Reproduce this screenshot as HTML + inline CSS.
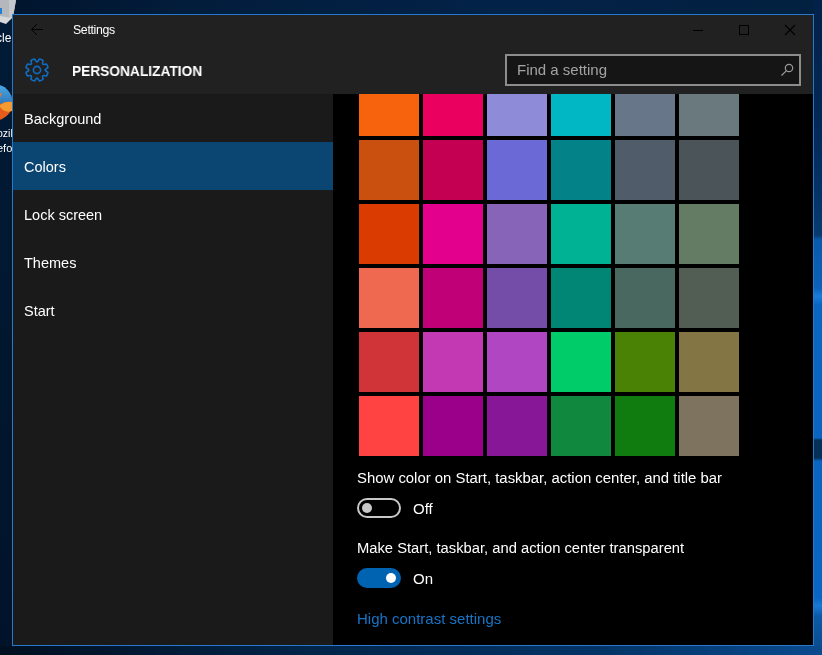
<!DOCTYPE html>
<html><head><meta charset="utf-8">
<style>
*{margin:0;padding:0;box-sizing:border-box}
html,body{width:822px;height:655px;overflow:hidden;background:#011a36;font-family:"Liberation Sans",sans-serif}
.abs{position:absolute}
#win{position:absolute;left:12px;top:14px;width:802px;height:632px;border:1px solid #2878cc;background:#000}
#hdr{position:absolute;left:13px;top:15px;width:800px;height:79px;background:#212121}
#side{position:absolute;left:13px;top:94px;width:320px;height:551px;background:#1a1a1a}
#content{position:absolute;left:333px;top:94px;width:480px;height:551px;background:#000;overflow:hidden}
.t{position:absolute;white-space:nowrap;color:#fff;line-height:1;will-change:transform}
.sw{position:absolute;width:60px;height:60px}
.nav{position:absolute;left:13px;width:320px;height:48px}
</style></head><body>
<!-- desktop -->
<div class="abs" style="left:0;top:0;width:822px;height:15px;background:linear-gradient(90deg,#01142c 0px,#021d3c 200px,#032248 500px,#02203f 822px)"></div>
<div class="abs" style="left:0;top:0;width:13px;height:655px;background:linear-gradient(#011a36,#011830 300px,#01132a 655px)"></div>
<div class="abs" style="left:814px;top:0;width:8px;height:655px;background:linear-gradient(#02214a 0px,#032856 120px,#05346a 200px,#083a70 235px,#0a5aaa 240px,#0b62b8 288px,#1a7cda 296px,#0b66c2 305px,#0a64c0 438px,#04305a 440px,#04305a 458px,#0a64c0 461px,#0a66c4 598px,#1a7ad2 606px,#0b5aa8 616px,#0a4a8a 655px)"></div>
<div class="abs" style="left:0;top:646px;width:822px;height:9px;background:linear-gradient(90deg,#010f20,#022448 300px,#033466 600px,#0a4a8e)"></div>
<!-- recycle bin -->
<svg class="abs" style="left:0;top:0" width="20" height="30" viewBox="0 0 20 30">
<path d="M0 0H16L13 17L6 23L0 21Z" fill="#b4b8bc"/>
<path d="M9 0H16L13 17L9 20Z" fill="#c4c7cb"/>
<path d="M0 16L12 18L6 24L0 22Z" fill="#d6d8da"/>
<path d="M0 8H2V14H0Z" fill="#1e7fd8"/>
</svg>
<div class="t" style="left:-4px;top:32px;font-size:12px;color:#fff">cle</div>
<!-- firefox -->
<svg class="abs" style="left:-22px;top:82px" width="34" height="40" viewBox="0 0 34 40">
<defs><linearGradient id="fg" x1="0" y1="0" x2="0" y2="1"><stop offset="0" stop-color="#4aaae6"/><stop offset="1" stop-color="#1b4f9a"/></linearGradient></defs>
<circle cx="17" cy="20" r="17.5" fill="url(#fg)"/>
<path d="M-0.5 21C8 22 16 24 22 22C27 20 31 19 34.5 21A17.5 17.5 0 0 1 -0.5 21Z" fill="#e65a1a"/>
<path d="M21 24C25 20 30 19 34.5 20L34 29C30 31 25 29 21 24Z" fill="#f39a30"/>
<path d="M19 12L24 11L22 16Z" fill="#f07a22"/>
</svg>
<div class="t" style="left:-3px;top:128px;font-size:10.5px;color:#fff">ozil</div>
<div class="t" style="left:-3px;top:143px;font-size:11px;color:#fff">efo</div>
<div id="win"></div>
<div id="hdr"></div>
<div id="side"></div>
<div id="content"></div>

<!-- title bar -->
<svg class="abs" style="left:30px;top:23px" width="14" height="13" viewBox="0 0 14 13"><path d="M13 6.5H1.5M7 1L1.5 6.5L7 12" stroke="#000" stroke-width="1" fill="none"/></svg>
<div class="t" style="left:73px;top:24px;font-size:12.3px;letter-spacing:-0.33px">Settings</div>
<svg class="abs" style="left:690px;top:20px" width="110" height="20" viewBox="0 0 110 20">
<path d="M3 10.5H13" stroke="#000" stroke-width="1" fill="none"/>
<rect x="49.5" y="5.5" width="9" height="9" stroke="#000" stroke-width="1" fill="none"/>
<path d="M95 5L105 15M105 5L95 15" stroke="#000" stroke-width="1.1" fill="none"/>
</svg>

<!-- header -->
<svg class="abs" style="left:23px;top:56px" width="28" height="28" viewBox="-14 -14 28 28">
<path d="M-0.75 -8.57Q0.00 -7.70 0.75 -8.57L2.42 -10.93Q4.44 -10.72 6.02 -9.45L5.53 -6.59Q5.44 -5.44 6.59 -5.53L9.45 -6.02Q10.72 -4.44 10.93 -2.42L8.57 -0.75Q7.70 -0.00 8.57 0.75L10.93 2.42Q10.72 4.44 9.45 6.02L6.59 5.53Q5.44 5.44 5.53 6.59L6.02 9.45Q4.44 10.72 2.42 10.93L0.75 8.57Q0.00 7.70 -0.75 8.57L-2.42 10.93Q-4.44 10.72 -6.02 9.45L-5.53 6.59Q-5.44 5.44 -6.59 5.53L-9.45 6.02Q-10.72 4.44 -10.93 2.42L-8.57 0.75Q-7.70 0.00 -8.57 -0.75L-10.93 -2.42Q-10.72 -4.44 -9.45 -6.02L-6.59 -5.53Q-5.44 -5.44 -5.53 -6.59L-6.02 -9.45Q-4.44 -10.72 -2.42 -10.93Z" stroke="#0f6cc2" stroke-width="1.6" fill="none" stroke-linejoin="round"/>
<circle cx="0" cy="0" r="3.6" stroke="#0f6cc2" stroke-width="1.6" fill="none"/>
</svg>
<div class="t" style="left:71.7px;top:62.6px;font-size:15px;font-weight:bold;transform:scaleX(0.915);transform-origin:0 0">PERSONALIZATION</div>
<div class="abs" style="left:505px;top:54px;width:296px;height:32px;border:2px solid #8c8c8c;background:#151515"></div>
<div class="t" style="left:517px;top:62px;font-size:15px;color:#a3a3a3">Find a setting</div>
<svg class="abs" style="left:778px;top:60px" width="16" height="18" viewBox="0 0 16 18"><circle cx="11" cy="8" r="3.7" stroke="#9a9a9a" stroke-width="1.2" fill="none"/><path d="M8.2 10.8L3.5 15.5" stroke="#9a9a9a" stroke-width="1.2"/></svg>

<!-- nav -->
<div class="nav" style="top:142px;background:#0b4572"></div>
<div class="t" style="left:24px;top:111.5px;font-size:14.5px">Background</div>
<div class="t" style="left:24px;top:159.5px;font-size:14.5px">Colors</div>
<div class="t" style="left:24px;top:207.5px;font-size:14.5px">Lock screen</div>
<div class="t" style="left:24px;top:255.5px;font-size:14.5px">Themes</div>
<div class="t" style="left:24px;top:303.5px;font-size:14.5px">Start</div>

<!-- swatches -->
<div id="grid" class="abs" style="left:333px;top:94px;width:480px;height:551px;overflow:hidden">
<div class="sw" style="left:26px;top:-18px;background:#F7630C"></div>
<div class="sw" style="left:90px;top:-18px;background:#EA005E"></div>
<div class="sw" style="left:154px;top:-18px;background:#8E8CD8"></div>
<div class="sw" style="left:218px;top:-18px;background:#00B7C3"></div>
<div class="sw" style="left:282px;top:-18px;background:#68768A"></div>
<div class="sw" style="left:346px;top:-18px;background:#69797E"></div>
<div class="sw" style="left:26px;top:46px;background:#CA5010"></div>
<div class="sw" style="left:90px;top:46px;background:#C30052"></div>
<div class="sw" style="left:154px;top:46px;background:#6B69D6"></div>
<div class="sw" style="left:218px;top:46px;background:#038387"></div>
<div class="sw" style="left:282px;top:46px;background:#515C6B"></div>
<div class="sw" style="left:346px;top:46px;background:#4A5459"></div>
<div class="sw" style="left:26px;top:110px;background:#DA3B01"></div>
<div class="sw" style="left:90px;top:110px;background:#E3008C"></div>
<div class="sw" style="left:154px;top:110px;background:#8764B8"></div>
<div class="sw" style="left:218px;top:110px;background:#00B294"></div>
<div class="sw" style="left:282px;top:110px;background:#567C73"></div>
<div class="sw" style="left:346px;top:110px;background:#647C64"></div>
<div class="sw" style="left:26px;top:174px;background:#EF6950"></div>
<div class="sw" style="left:90px;top:174px;background:#BF0077"></div>
<div class="sw" style="left:154px;top:174px;background:#744DA9"></div>
<div class="sw" style="left:218px;top:174px;background:#018574"></div>
<div class="sw" style="left:282px;top:174px;background:#486860"></div>
<div class="sw" style="left:346px;top:174px;background:#525E54"></div>
<div class="sw" style="left:26px;top:238px;background:#D13438"></div>
<div class="sw" style="left:90px;top:238px;background:#C239B3"></div>
<div class="sw" style="left:154px;top:238px;background:#B146C2"></div>
<div class="sw" style="left:218px;top:238px;background:#00CC6A"></div>
<div class="sw" style="left:282px;top:238px;background:#498205"></div>
<div class="sw" style="left:346px;top:238px;background:#847545"></div>
<div class="sw" style="left:26px;top:302px;background:#FF4343"></div>
<div class="sw" style="left:90px;top:302px;background:#9A0089"></div>
<div class="sw" style="left:154px;top:302px;background:#881798"></div>
<div class="sw" style="left:218px;top:302px;background:#10893E"></div>
<div class="sw" style="left:282px;top:302px;background:#107C10"></div>
<div class="sw" style="left:346px;top:302px;background:#7E735F"></div>
</div>

<div class="t" style="left:357px;top:471px;font-size:14.9px">Show color on Start, taskbar, action center, and title bar</div>
<div class="abs" style="left:357px;top:498px;width:44px;height:20px;border:2px solid #c8c8c8;border-radius:10px"></div>
<div class="abs" style="left:362px;top:503px;width:10px;height:10px;border-radius:50%;background:#c8c8c8"></div>
<div class="t" style="left:413px;top:501px;font-size:15px">Off</div>

<div class="t" style="left:357px;top:541px;font-size:14.75px">Make Start, taskbar, and action center transparent</div>
<div class="abs" style="left:357px;top:568px;width:44px;height:20px;background:#0063b1;border-radius:10px"></div>
<div class="abs" style="left:386px;top:573px;width:10px;height:10px;border-radius:50%;background:#fff"></div>
<div class="t" style="left:413px;top:571px;font-size:15px">On</div>

<div class="t" style="left:357px;top:611px;font-size:15px;color:#1874c6">High contrast settings</div>
</body></html>
